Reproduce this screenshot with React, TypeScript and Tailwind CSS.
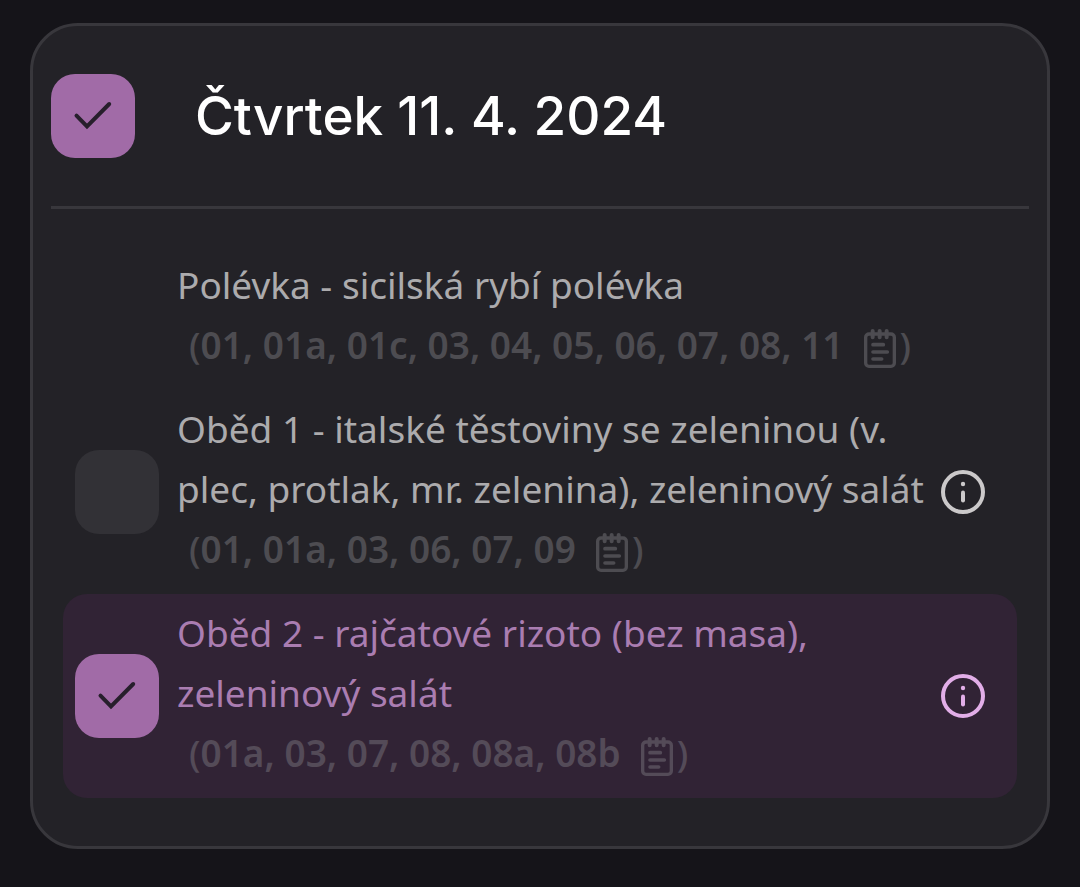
import { useState } from "react";
import clsx from "clsx";

type Meal = {
  id: string;
  name: string[];
  allergens: string;
  orderable: boolean;
};

const meals: Meal[] = [
  {
    id: "soup",
    name: ["Polévka - sicilská rybí polévka"],
    allergens: "01, 01a, 01c, 03, 04, 05, 06, 07, 08, 11",
    orderable: false,
  },
  {
    id: "lunch-1",
    name: ["Oběd 1 - italské těstoviny se zeleninou (v.", "plec, protlak, mr. zelenina), zeleninový salát"],
    allergens: "01, 01a, 03, 06, 07, 09",
    orderable: true,
  },
  {
    id: "lunch-2",
    name: ["Oběd 2 - rajčatové rizoto (bez masa),", "zeleninový salát"],
    allergens: "01a, 03, 07, 08, 08a, 08b",
    orderable: true,
  },
];

function NotepadIcon() {
  return (
    <svg viewBox="0 0 96 117" className="mt-1.5 h-[39px] w-8 shrink-0" fill="none" stroke="currentColor" strokeLinecap="round" aria-hidden="true">
      <rect x="5" y="15" width="86" height="97" rx="10" strokeWidth="10" />
      <path d="M26 6v19M47 6v19M68 6v19" strokeWidth="12" />
      <path d="M27 47h31M27 69h43M27 90h26" strokeWidth="11" />
    </svg>
  );
}

function InfoIcon() {
  return (
    <svg viewBox="0 0 44 44" className="size-11" fill="none" stroke="currentColor" strokeLinecap="round" aria-hidden="true">
      <circle cx="22" cy="22" r="20" strokeWidth="4" />
      <path d="M22 22.5v8" strokeWidth="4" />
      <circle cx="22" cy="14" r="2.2" fill="currentColor" stroke="none" />
    </svg>
  );
}

type CheckboxProps = {
  label: string;
  checked: boolean;
  onChange: (checked: boolean) => void;
};

function Checkbox({ label, checked, onChange }: CheckboxProps) {
  return (
    <label className="grid size-[84px] shrink-0 cursor-pointer">
      <input
        type="checkbox"
        aria-label={label}
        checked={checked}
        onChange={(e) => onChange(e.target.checked)}
        className="col-start-1 row-start-1 size-full cursor-pointer appearance-none rounded-3xl bg-[#323136] checked:bg-[#a16ba7]"
      />
      {checked && (
        <svg viewBox="0 0 84 84" className="pointer-events-none col-start-1 row-start-1 size-full" fill="none" aria-hidden="true">
          <path d="M25.5 41.7 36 52.4 58.2 30" stroke="#271f2c" strokeWidth="4" strokeLinecap="round" />
        </svg>
      )}
    </label>
  );
}

export default function App() {
  const [selected, setSelected] = useState<string | null>("lunch-2");

  return (
    <main className="min-h-screen bg-[#151419] px-[30px] pt-[23px] pb-[38px]">
      <section className="rounded-[48px] border-3 border-[#38373c] bg-[#232227] px-[18px] pt-12 pb-12">
        <header className="flex items-center gap-[60px] border-b-3 border-[#38373c] pb-12">
          <Checkbox
            label="Čtvrtek 11. 4. 2024"
            checked={selected !== null}
            onChange={(on) => setSelected(on ? "lunch-2" : null)}
          />
          <h1 className="font-['Inter',sans-serif] text-[53px] leading-[60px] font-medium text-white">Čtvrtek 11. 4. 2024</h1>
        </header>

        <ul className="mx-3 mt-[37px]">
          {meals.map((meal) => {
            const active = meal.id === selected;
            return (
              <li
                key={meal.id}
                className={clsx(
                  "flex items-center rounded-3xl pr-8 pl-3",
                  active ? "bg-[#312335]" : "bg-transparent"
                )}
              >
                {meal.orderable ? (
                  <Checkbox
                    label={meal.name.join(" ")}
                    checked={active}
                    onChange={(on) => setSelected(on ? meal.id : null)}
                  />
                ) : (
                  <span className="w-[84px] shrink-0" />
                )}

                <div className="ml-[18px] min-w-0 flex-1 pt-[9px] pb-[15px] font-['Noto_Sans',sans-serif] text-[37px] leading-[60px] whitespace-nowrap">
                  {meal.name.map((line) => (
                    <p key={line} className={active ? "text-[#aa7db1]" : "text-[#acabad]"}>
                      {line}
                    </p>
                  ))}
                  <p
                    className={clsx(
                      "flex items-center pl-3 font-semibold",
                      active ? "text-[#544b58]" : "text-[#4d4c51]"
                    )}
                  >
                    <span className="mr-5">
                      <span className="font-medium">(</span>
                      {meal.allergens}
                    </span>
                    <NotepadIcon />
                    <span className="ml-1 font-medium">)</span>
                  </p>
                </div>

                {meal.orderable && (
                  <button
                    type="button"
                    aria-label="Informace o jídle"
                    className={clsx("shrink-0 cursor-pointer", active ? "text-[#e2aee8]" : "text-[#cbc9ca]")}
                  >
                    <InfoIcon />
                  </button>
                )}
              </li>
            );
          })}
        </ul>
      </section>
    </main>
  );
}
